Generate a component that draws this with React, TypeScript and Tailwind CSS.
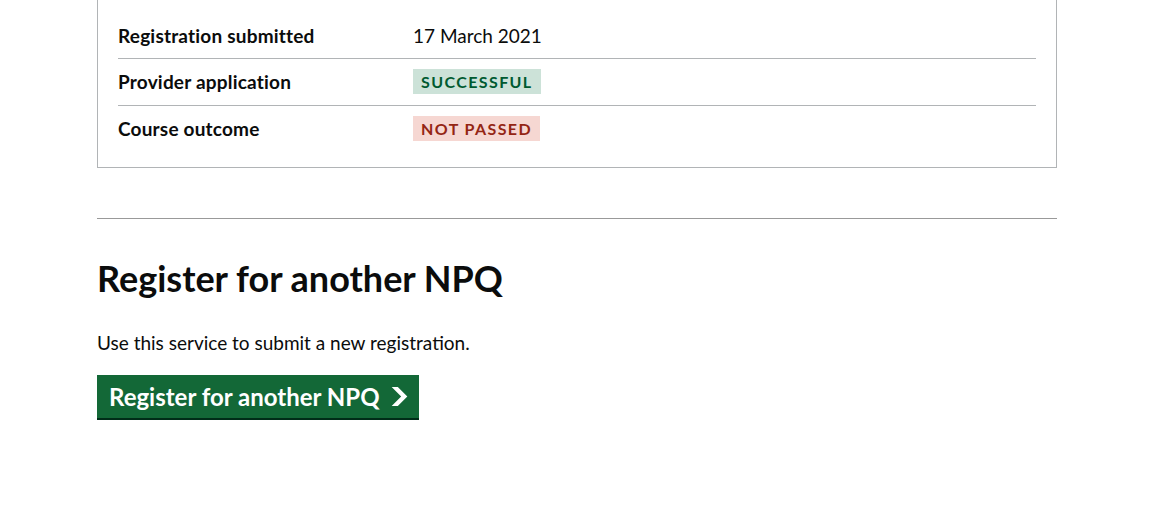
const rows = [
  { key: "Registration submitted", value: "17 March 2021" },
  { key: "Provider application", tag: "SUCCESSFUL", tone: "green" },
  { key: "Course outcome", tag: "NOT PASSED", tone: "red" },
];

function Tag({ text, tone }: { text: string; tone: string }) {
  const tones: Record<string, string> = {
    green: "bg-[#cce2d8] text-[#005a30]",
    red: "bg-[#f6d7d2] text-[#942514]",
  };
  return (
    <span
      className={`block px-[8px] pt-[3px] pb-[2px] text-[16px] leading-[20px] font-bold tracking-[1.4px] ${tones[tone]}`}
    >
      {text}
    </span>
  );
}

export default function App() {
  return (
    <div className="min-h-[515px] bg-white text-[#0b0c0c] font-['Lato',sans-serif]">
      <div className="ml-[97px] w-[960px]">
        {/* summary card, top edge scrolled out of view */}
        <div className="border-x border-b border-[#b1b4b6] px-[20px] pt-[13px] pb-[15px]">
          {rows.map((row, i) => (
            <div
              key={row.key}
              className={`flex pt-[10px] ${row.tag ? "pb-[11px]" : "pb-[10px]"} ${
                i < rows.length - 1 ? "border-b border-[#b1b4b6]" : ""
              }`}
            >
              <div className="w-[295px] text-[19px] leading-[25px] font-bold tracking-[0.2px]">
                {row.key}
              </div>
              <div className="flex flex-1 items-start text-[19px] leading-[25px]">
                {row.tag ? <Tag text={row.tag} tone={row.tone!} /> : row.value}
              </div>
            </div>
          ))}
        </div>

        <hr className="mt-[50px] border-0 border-t border-[#999]" />

        <h2 className="mt-[39px] text-[36px] leading-[40px] font-bold">
          Register for another NPQ
        </h2>

        <p className="mt-[32px] text-[19px] leading-[25px]">
          Use this service to submit a new registration.
        </p>

        <button
          type="button"
          className="mt-[20px] h-[43px] flex items-center gap-[11px] pl-[12px] pr-[11px] bg-[#136837] text-white text-[24px] font-bold shadow-[0_2px_0_#002d18]"
        >
          Register for another NPQ
          <svg width="17" height="19" viewBox="0 0 33 40" aria-hidden="true">
            <path fill="currentColor" d="M0 0h13l20 20-20 20H0l20-20z" />
          </svg>
        </button>
      </div>
    </div>
  );
}
